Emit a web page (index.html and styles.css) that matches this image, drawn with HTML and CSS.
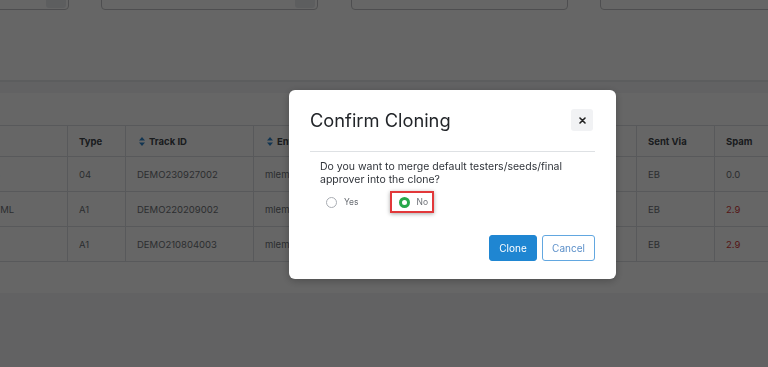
FILE: index.html
```html
<!DOCTYPE html>
<html lang="en">
<head>
<meta charset="utf-8">
<title>Confirm Cloning</title>
<link rel="stylesheet" href="styles.css">
</head>
<body>
<div class="page">
  <div class="filters">
    <div class="field"><span class="val">Campaign</span><span class="dd"></span></div>
    <div class="field"><span class="val">All</span><span class="dd"></span></div>
    <div class="field"><span class="val ph">Enter user here</span></div>
    <div class="field"><span class="val">EB</span></div>
  </div>
  <div class="card">
    <table class="grid">
      <colgroup>
        <col class="c-name"><col class="c-type"><col class="c-track"><col class="c-email"><col class="c-subj"><col class="c-via"><col class="c-spam">
      </colgroup>
      <thead>
        <tr>
          <th>ID</th>
          <th>Type</th>
          <th><svg class="sort" width="6" height="9" viewBox="0 0 6 9"><path d="M3 0L6 3.6H0Z M0 5.4H6L3 9Z" fill="#2f86cc"/></svg>Track ID</th>
          <th><svg class="sort" width="6" height="9" viewBox="0 0 6 9"><path d="M3 0L6 3.6H0Z M0 5.4H6L3 9Z" fill="#2f86cc"/></svg>Envelope From</th>
          <th>Subject</th>
          <th>Sent Via</th>
          <th>Spam</th>
        </tr>
      </thead>
      <tbody>
        <tr><td>Q3</td><td>04</td><td>DEMO230927002</td><td>mlemon@demo.com</td><td>Autumn update</td><td>EB</td><td>0.0</td></tr>
        <tr><td>HTML</td><td>A1</td><td>DEMO220209002</td><td>mlemon@demo.com</td><td>February news</td><td>EB</td><td class="bad">2.9</td></tr>
        <tr><td>Q2</td><td>A1</td><td>DEMO210804003</td><td>mlemon@demo.com</td><td>August news</td><td>EB</td><td class="bad">2.9</td></tr>
      </tbody>
    </table>
  </div>
</div>
<div class="overlay"></div>
<div class="modal" role="dialog" aria-labelledby="mt">
  <div class="modal-head">
    <h2 id="mt">Confirm Cloning</h2>
    <button class="close" aria-label="Close"><svg width="7" height="7" viewBox="0 0 7 7"><path d="M1 1L6 6M6 1L1 6" stroke="#222" stroke-width="1.6" stroke-linecap="round"/></svg></button>
  </div>
  <div class="modal-body">
    <p>Do you want to merge default testers/seeds/final approver into the clone?</p>
    <div class="radios">
      <label class="radio"><span class="circle"></span>Yes</label>
      <label class="radio picked"><span class="circle on"></span>No</label>
    </div>
  </div>
  <div class="modal-foot">
    <button class="btn primary">Clone</button>
    <button class="btn outline">Cancel</button>
  </div>
</div>
</body>
</html>
```
FILE: styles.css
```css
* { box-sizing: border-box; }
html, body { margin: 0; }
body {
  font-family: Inter, "Noto Sans", sans-serif;
  background: #f4f5f7;
  width: 768px;
  height: 367px;
  overflow: hidden;
}
.page { width: 768px; }
.filters {
  display: grid;
  grid-template-columns: repeat(4, 217px);
  column-gap: 32.3px;
  margin-left: -148px;
  margin-top: -22px;
  padding-bottom: 70px;
  background: #fff;
  border-bottom: 2px solid #e6e8eb;
}
.field {
  height: 32px;
  border: 1px solid #c2c4c7;
  border-radius: 4px;
  display: flex;
  align-items: center;
  justify-content: space-between;
  padding: 0 2px 0 10px;
  font-size: 11px;
  color: #555;
  background: #fff;
}
.val.ph { color: #aaa; }
.dd {
  width: 20px;
  height: 28px;
  background: #e9ebee;
  border-radius: 3px;
}
.card {
  margin-top: 11px;
  background: #fff;
  padding: 32px 0 31px;
}
.grid {
  border-collapse: collapse;
  table-layout: fixed;
  width: 873px;
  margin-left: -25px;
  font-size: 9.5px;
}
.c-name { width: 92px; }
.c-type { width: 58px; }
.c-track { width: 128px; }
.c-email { width: 207px; }
.c-subj { width: 176px; }
.c-via { width: 78px; }
.c-spam { width: 134px; }
.grid th, .grid td {
  border: 1px solid #dcdfe3;
  text-align: left;
  padding: 0 11px;
  white-space: nowrap;
  overflow: hidden;
}
.grid th {
  height: 31px;
  font-weight: 700;
  color: #42474d;
}
.grid td {
  height: 35px;
  color: #6f7378;
}
.grid td.bad { color: #d33a3a; }
.sort {
  display: inline-block;
  vertical-align: -1px;
  margin: 0 4px 0 2px;
}
.overlay {
  position: fixed;
  inset: 0;
  background: rgba(0, 0, 0, 0.6);
}
.modal {
  position: fixed;
  left: 289px;
  top: 90px;
  width: 327px;
  height: 189px;
  background: #fff;
  border-radius: 6px;
  box-shadow: 0 2px 8px rgba(0, 0, 0, 0.25);
  padding: 19px 21px 18px 21px;
  display: flex;
  flex-direction: column;
}
.modal-head {
  display: flex;
  justify-content: space-between;
  align-items: center;
  padding: 0 2px 20px 0;
  border-bottom: 1px solid #dee1e4;
}
.modal-head h2 {
  margin: 0;
  font-size: 18.3px;
  line-height: 22px;
  font-weight: 400;
  color: #222529;
}
.close {
  width: 22px;
  height: 22px;
  border: 0;
  border-radius: 3px;
  background: #f1f2f4;
  padding: 0;
  display: flex;
  align-items: center;
  justify-content: center;
}
.modal-body { padding: 9px 0 0 10px; }
.modal-body p {
  margin: 0;
  width: 262px;
  font-size: 10.5px;
  line-height: 12.5px;
  color: #30343a;
}
.radios {
  display: flex;
  align-items: center;
  margin-top: 5px;
  padding-left: 6px;
  gap: 31px;
}
.radio {
  display: flex;
  align-items: center;
  gap: 7px;
  font-size: 8.5px;
  color: #6b6f75;
  height: 22px;
}
.radio.picked {
  border: 2px solid #e2383a;
  box-shadow: 0 1px 4px rgba(0, 0, 0, 0.35);
  padding: 0 4px 0 7px;
}
.circle {
  width: 11px;
  height: 11px;
  border-radius: 50%;
  border: 1px solid #a9adb3;
  background: #fff;
}
.circle.on {
  border: 3.5px solid #27a84a;
  background: #fff;
}
.modal-foot {
  margin-top: auto;
  display: flex;
  justify-content: flex-end;
  gap: 5px;
}
.btn {
  height: 26px;
  border-radius: 3px;
  font-family: inherit;
  font-size: 10px;
  padding: 0;
}
.btn.primary {
  width: 48px;
  background: #1f86d2;
  border: 1px solid #1f86d2;
  color: #fff;
}
.btn.outline {
  width: 53px;
  background: #fff;
  border: 1px solid #62a7e0;
  color: #5b8fc9;
}
```
